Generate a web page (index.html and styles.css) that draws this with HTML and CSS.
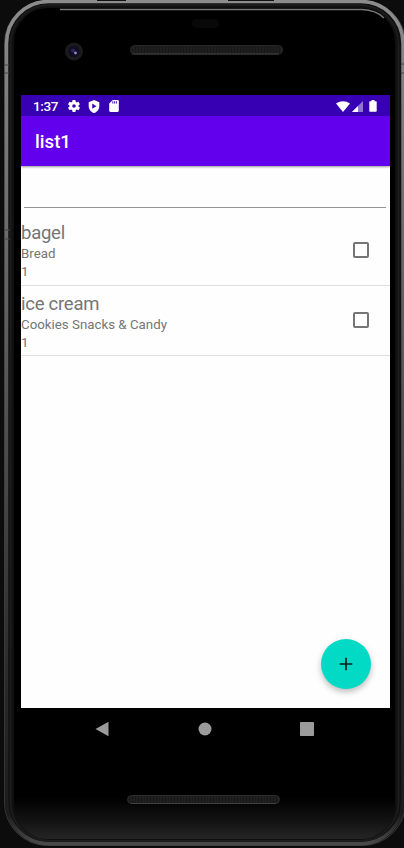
FILE: index.html
```html
<!DOCTYPE html>
<html lang="en">
<head>
<meta charset="utf-8">
<title>list1</title>
<link rel="stylesheet" href="styles.css">
</head>
<body>
<div class="device">
  <svg class="frame" width="404" height="848" viewBox="0 0 404 848" aria-hidden="true">
    <defs>
      <linearGradient id="rim" gradientUnits="userSpaceOnUse" x1="0" y1="0" x2="0" y2="848">
        <stop offset="0" stop-color="#8d8d8d"/><stop offset=".2" stop-color="#747474"/><stop offset=".5" stop-color="#505050"/><stop offset=".8" stop-color="#2a2a2a"/><stop offset=".96" stop-color="#1c1c1c"/><stop offset="1" stop-color="#505050"/>
      </linearGradient>
      <linearGradient id="glass" x1="0" y1="0" x2="0" y2="1">
        <stop offset="0" stop-color="#000"/><stop offset=".95" stop-color="#000"/><stop offset=".98" stop-color="#131413"/><stop offset="1" stop-color="#242524"/>
      </linearGradient>
      <pattern id="mesh" width="3" height="3" patternUnits="userSpaceOnUse"><rect width="3" height="3" fill="#1f1f1f"/><rect width="1" height="3" fill="#181818"/></pattern>
    </defs>
    <rect x="4.500" y=".5" width="401" height="845" rx="43" fill="#101010" stroke="#3c3c3c"/>
    <rect x="6.500" y="1.500" width="396.500" height="842" rx="42" fill="none" stroke="url(#rim)" stroke-width="3.500"/>
    <rect x="10.500" y="5" width="388" height="836" rx="39" fill="none" stroke="#1c1c1c" stroke-width="2"/>
    <rect x="14" y="8" width="381" height="831" rx="34" fill="url(#glass)"/>
    <path d="M60 9.500H362Q376 10 384 18" fill="none" stroke="#777" stroke-width="1.300"/>
    <path d="M97 0h29M228 0h46" stroke="#111" stroke-width="2"/>
    <path d="M4 65h5M4 73h5M4 230h6M4 239h6M401 64h3M401 73h3" stroke="#444"/>
    <rect x="192" y="19" width="27" height="9" rx="4" fill="#080808"/>
    <circle cx="74" cy="51.500" r="9" fill="#1b1b1d"/>
    <circle cx="74" cy="51.500" r="5.500" fill="#100d20"/>
    <circle cx="73" cy="50.500" r="2" fill="#302258"/>
    <circle cx="75.500" cy="53" r="1.400" fill="#9b82d0"/>
    <rect x="130.500" y="45.500" width="152" height="8.500" rx="4" fill="url(#mesh)" stroke="#282828"/>
    <rect x="127.500" y="795.500" width="152" height="8" rx="4" fill="url(#mesh)" stroke="#2c2c2c"/>
    <path d="M132 54H279M131 803.500H276" stroke="#404040"/>
  </svg>
  <div class="screen">
    <div class="status">
      <span class="time">1:37</span>
      <svg class="s-gear" width="12" height="12" viewBox="2 2 20 20"><path fill="#fff" d="M19.400 13a7.500 7.500 0 0 0 0-2l2.100-1.600c.2-.2.300-.4.100-.7l-2-3.400c-.1-.2-.4-.3-.6-.2l-2.500 1a7 7 0 0 0-1.700-1l-.4-2.700c0-.2-.2-.4-.5-.4h-4c-.2 0-.4.200-.5.400L9.100 5.100a8 8 0 0 0-1.700 1l-2.500-1c-.2-.1-.5 0-.6.200l-2 3.400c-.1.200-.1.500.1.700L4.500 11a8 8 0 0 0 0 2l-2.100 1.600c-.2.200-.2.400-.1.700l2 3.400c.1.200.4.300.6.200l2.500-1a7 7 0 0 0 1.700 1l.4 2.700c0 .2.200.4.500.4h4c.2 0 .5-.2.500-.4l.4-2.700a7 7 0 0 0 1.700-1l2.500 1c.2.100.5 0 .6-.2l2-3.400c.1-.2.100-.5-.1-.7zM12 15a3 3 0 1 1 0-6 3 3 0 0 1 0 6z"/></svg>
      <svg class="s-shield" width="12" height="13" viewBox="3 1 18 22"><path fill="#fff" d="M12 1 3 5v6c0 5.500 3.800 10.700 9 12 5.200-1.300 9-6.500 9-12V5z"/><path fill="#3700b3" d="M9 7v9l7-4.500z"/></svg>
      <svg class="s-sd" width="10" height="12" viewBox="4 2 16 20"><path fill="#fff" d="M18 2h-8L4 8v12c0 1.100.9 2 2 2h12c1.100 0 2-.9 2-2V4c0-1.100-.9-2-2-2z"/><path d="M10 4v4M13 4v4M16 4v4" stroke="#3700b3" stroke-width="1.500"/></svg>
      <svg class="s-wifi" width="14" height="11" viewBox="0 0 14 11"><path fill="#fff" d="M0 2.500Q7-2.200 14 2.500L7 11z"/></svg>
      <svg class="s-cell" width="11" height="11" viewBox="0 0 11 11"><path fill="#9175d5" d="M11 0v11H0z"/><path fill="#fff" d="M6 5v6H0z"/></svg>
      <svg class="s-batt" width="8" height="12" viewBox="0 0 8 12"><path fill="#fff" d="M2.500 0h3v1.300H7q.7 0 .7.700v9q0 .8-.7.800H1q-.7 0-.7-.8V2q0-.7.700-.7h1.500z"/></svg>
    </div>
    <header class="bar">list1</header>
    <main class="content">
      <div class="field"></div>
      <div class="item"><div class="info"><div class="name">bagel</div><div class="meta">Bread</div><div class="meta">1</div></div><span class="check"></span></div>
      <div class="item"><div class="info"><div class="name">ice cream</div><div class="meta">Cookies Snacks &amp; Candy</div><div class="meta">1</div></div><span class="check"></span></div>
      <div class="fab"><svg width="14" height="14" viewBox="0 0 14 14"><path d="M7 .7v12.600M.7 7h12.600" stroke="#06201e" stroke-width="1.700"/></svg></div>
    </main>
  </div>
  <nav class="nav">
    <svg width="14" height="16" viewBox="0 0 14 16"><path fill="#9b9b9b" d="M.5 8 13.500.7v14.600z"/></svg>
    <svg width="14" height="14" viewBox="0 0 14 14"><circle cx="7" cy="7" r="6.500" fill="#9b9b9b"/></svg>
    <svg width="14" height="14" viewBox="0 0 14 14"><rect width="14" height="14" rx=".7" fill="#9b9b9b"/></svg>
  </nav>
</div>
</body>
</html>
```
FILE: styles.css
```css
* { box-sizing: border-box; }
body { margin: 0; background: #0c0c0c; font-family: Roboto, sans-serif; overflow: hidden; }
.device { position: relative; width: 404px; height: 848px; padding: 95px 14px 0 21px; }
.frame { position: absolute; left: 0; top: 0; }
.screen { position: relative; display: flex; flex-direction: column; height: 613px; background: #fefefe; }
.status { display: flex; align-items: center; height: 21px; padding: 1px 13px 0 12px; background: #3700b3; color: #fff; }
.time { width: 35px; font-size: 13.500px; font-weight: 500; line-height: 20px; letter-spacing: -.4px; }
.s-shield { margin-left: 8px; }
.s-sd { margin-left: 9px; }
.s-wifi { margin-left: auto; }
.s-cell { margin-left: 2px; }
.s-batt { margin-left: 6px; }
.bar { height: 50px; padding-left: 14px; background: #6200ee; color: #fff; font-size: 18.700px; font-weight: 500; line-height: 52px; box-shadow: 0 1px 2px #0006; }
.content { position: relative; flex: 1; }
.field { height: 42px; margin: 0 4px 7px 3px; border-bottom: 1px solid #929292; }
.item { display: flex; align-items: center; justify-content: space-between; height: 70.500px; padding-right: 21px; border-bottom: 1px solid #dedede; color: #757575; }
.info { padding-top: 3px; }
.name { font-size: 18.500px; line-height: 24px; letter-spacing: -.25px; }
.meta { font-size: 13.300px; line-height: 18px; }
.check { width: 16px; height: 16px; border: 2px solid #757575; border-radius: 2px; }
.fab { position: absolute; right: 19px; bottom: 19px; display: flex; align-items: center; justify-content: center; width: 50px; height: 50px; border-radius: 50%; background: #03dac5; box-shadow: 0 3px 6px #0004; }
.nav { position: relative; display: flex; align-items: center; justify-content: space-between; height: 42px; padding: 0 76px 0 74px; }
```
